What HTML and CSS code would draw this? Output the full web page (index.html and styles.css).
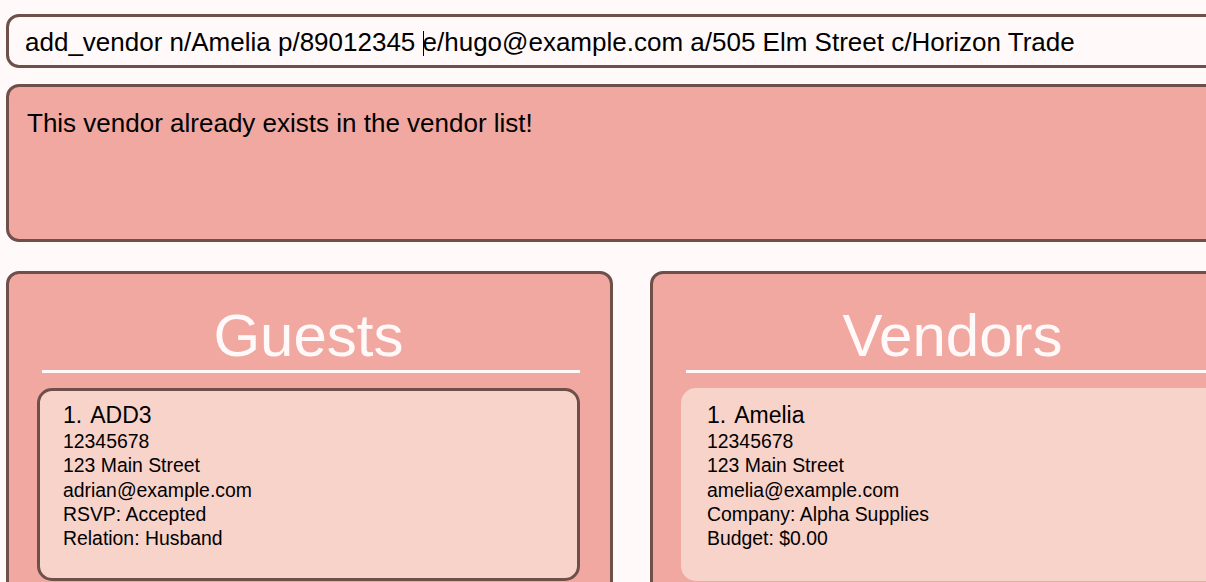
FILE: index.html
```html
<!DOCTYPE html>
<html>
<head>
<meta charset="utf-8">
<link rel="stylesheet" href="styles.css">
</head>
<body>
<div class="app">
  <div class="command">
    <span class="command-text">add_vendor n/Amelia p/89012345 <span class="caret"></span>e/hugo@example.com a/505 Elm Street c/Horizon Trade</span>
  </div>
  <div class="result">This vendor already exists in the vendor list!</div>
  <div class="lists">
    <section class="panel">
      <h1 class="panel-title">Guests</h1>
      <div class="card card-selected">
        <div class="card-name"><span class="card-id">1.</span>ADD3</div>
        <div class="card-line">12345678</div>
        <div class="card-line">123 Main Street</div>
        <div class="card-line">adrian@example.com</div>
        <div class="card-line">RSVP: Accepted</div>
        <div class="card-line">Relation: Husband</div>
      </div>
    </section>
    <section class="panel">
      <h1 class="panel-title">Vendors</h1>
      <div class="card">
        <div class="card-name"><span class="card-id">1.</span>Amelia</div>
        <div class="card-line">12345678</div>
        <div class="card-line">123 Main Street</div>
        <div class="card-line">amelia@example.com</div>
        <div class="card-line">Company: Alpha Supplies</div>
        <div class="card-line">Budget: $0.00</div>
      </div>
    </section>
  </div>
</div>
</body>
</html>
```
FILE: styles.css
```css
html, body {
  margin: 0;
  padding: 0;
  background: #fffaf9;
  overflow: hidden;
}
body {
  font-family: "Liberation Sans", Arial, sans-serif;
  color: #000;
}
.app {
  width: 1251px;
  padding: 14px 0 0 6px;
  display: flex;
  flex-direction: column;
}
.command {
  height: 48px;
  border: 3px solid #6e4f4a;
  border-radius: 13px;
  background: #fffaf9;
  display: flex;
  align-items: center;
  padding-left: 16px;
  box-sizing: content-box;
}
.command-text {
  font-size: 26px;
  white-space: nowrap;
  line-height: 30px;
  padding-top: 1px;
}
.caret {
  display: inline-block;
  width: 1px;
  height: 25px;
  background: #000;
  vertical-align: -5px;
  margin-right: -1px;
}
.result {
  margin-top: 16px;
  border: 3px solid #6e4f4a;
  border-radius: 13px;
  background: #f0a8a0;
  padding: 21px 0 0 18px;
  font-size: 26px;
  line-height: 30px;
  box-sizing: border-box;
  height: 158px;
}
.lists {
  margin-top: 29px;
  display: flex;
  gap: 37px;
}
.panel {
  width: 607px;
  height: 340px;
  box-sizing: border-box;
  border: 3px solid #6e4f4a;
  border-radius: 13px;
  background: #f0a8a0;
  padding: 27px 30px 0 28px;
}
.panel-title {
  margin: 0 0 15px 5px;
  font-weight: normal;
  font-size: 60px;
  line-height: 69px;
  height: 69px;
  color: #fffaf9;
  text-align: center;
  border-bottom: 3px solid #fffaf9;
  padding-right: 5px;
}
.card {
  background: #f7d3ca;
  border: 3px solid #f7d3ca;
  border-radius: 15px;
  padding: 10px 20px 28px 23px;
}
.card-selected {
  border-color: #6e4f4a;
}
.card-name {
  font-size: 23px;
  line-height: 28px;
}
.card-id {
  margin-right: 8px;
}
.card-line {
  font-size: 19.4px;
  line-height: 24.3px;
}
```
